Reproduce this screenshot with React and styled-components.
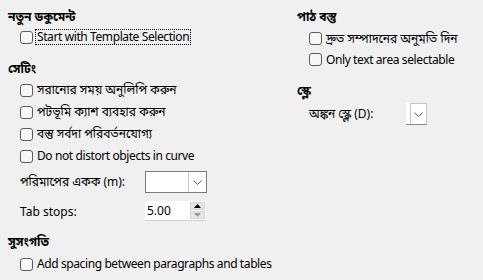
import React from 'react'
import styled, { createGlobalStyle } from 'styled-components'

const GlobalStyle = createGlobalStyle`
  html, body {
    margin: 0;
    padding: 0;
    background: #f0f0f0;
  }
  body {
    font-family: "Noto Sans", "Noto Sans Bengali", "Liberation Sans", sans-serif;
    font-size: 12px;
    color: #000;
  }
`

const Page = styled.div`
  width: 483px;
  height: 280px;
  display: grid;
  grid-template-columns: 289px 1fr;
  background: #f0f0f0;
  overflow: hidden;
`

const Column = styled.div`
  display: flex;
  flex-direction: column;
  padding-top: 7px;
  padding-left: 8px;
`

const Heading = styled.div`
  height: 20px;
  line-height: 20px;
  font-weight: bold;
  margin-top: ${(p) => p.$gap || 0}px;
  white-space: nowrap;
`

const Group = styled.div`
  display: flex;
  flex-direction: column;
  padding-left: 12px;
  margin-top: ${(p) => p.$gap || 0}px;
`

const CheckRow = styled.label`
  display: flex;
  align-items: center;
  gap: 3px;
  height: ${(p) => p.$h || 22}px;
  white-space: nowrap;
`

const Box = styled.span`
  width: 13px;
  height: 13px;
  box-sizing: border-box;
  border: 1px solid #5c5c5c;
  border-radius: 3px;
  background: #f7f7f7;
  flex: none;
`

const Caption = styled.span`
  padding: 0 1px;
  line-height: 14px;
  letter-spacing: ${(p) => (p.$en ? '-0.4px' : 'normal')};
  outline: ${(p) => (p.$focus ? '1px dotted #000' : 'none')};
`

const FieldRow = styled.div`
  display: flex;
  align-items: center;
  height: 24px;
  margin-top: ${(p) => p.$gap || 0}px;
  white-space: nowrap;
`

const FieldLabel = styled.span`
  width: ${(p) => p.$w}px;
  flex: none;
`

const Combo = styled.div`
  display: flex;
  width: ${(p) => p.$w}px;
  height: 22px;
  box-sizing: border-box;
  border: 1px solid #7a7a7a;
  background: #fff;
`

const ComboEntry = styled.div`
  flex: 1;
`

const ComboButton = styled.div`
  width: 17px;
  display: flex;
  align-items: center;
  justify-content: center;
  border-left: 1px solid #c8c8c8;
`

const NarrowCombo = styled.div`
  display: flex;
  width: 21px;
  height: 22px;
  box-sizing: border-box;
  background: #fff;
  border-bottom: 1px solid #8a8a8a;
  padding-left: 4px;
`

const NarrowButton = styled.div`
  flex: 1;
  display: flex;
  align-items: center;
  justify-content: center;
  border: 1px solid #c4c4c4;
  border-bottom: none;
`

const Spin = styled.div`
  display: flex;
  width: 61px;
  height: 20px;
  box-sizing: border-box;
  background: #fff;
  border-bottom: 1px solid #d0d0d0;
`

const SpinValue = styled.div`
  flex: 1;
  padding-left: 2px;
  line-height: 19px;
`

const SpinButtons = styled.div`
  width: 15px;
  display: flex;
  flex-direction: column;
  gap: 1px;
  padding: 1px 1px 1px 0;
`

const SpinButton = styled.div`
  flex: 1;
  display: flex;
  align-items: center;
  justify-content: center;
  background: #e6e6e6;
  border: 1px solid #d4d4d4;
`

const Chevron = () => (
  <svg width="9" height="5" viewBox="0 0 9 5">
    <path d="M0.5 0.5 L4.5 4.5 L8.5 0.5" fill="none" stroke="#606060" strokeWidth="1" />
  </svg>
)

const Arrow = ({ down, color }) => (
  <svg width="7" height="4" viewBox="0 0 7 4">
    <path d={down ? 'M0 0 L7 0 L3.5 4 Z' : 'M0 4 L7 4 L3.5 0 Z'} fill={color} />
  </svg>
)

const Check = ({ children, focus, en, h }) => (
  <CheckRow $h={h}>
    <Box />
    <Caption $focus={focus} $en={en}>
      {children}
    </Caption>
  </CheckRow>
)

export default function App() {
  return (
    <>
      <GlobalStyle />
      <Page>
        <Column>
          <Heading>নতুন ডকুমেন্ট</Heading>
          <Group>
            <Check h={20} focus en>
              Start with Template Selection
            </Check>
          </Group>
          <Heading $gap={12}>সেটিং</Heading>
          <Group>
            <Check>সরানোর সময় অনুলিপি করুন</Check>
            <Check>পটভূমি ক্যাশ ব্যবহার করুন</Check>
            <Check>বস্তু সর্বদা পরিবর্তনযোগ্য</Check>
            <Check en>Do not distort objects in curve</Check>
            <FieldRow $gap={3}>
              <FieldLabel $w={125}>পরিমাপের একক (m):</FieldLabel>
              <Combo $w={62}>
                <ComboEntry />
                <ComboButton>
                  <Chevron />
                </ComboButton>
              </Combo>
            </FieldRow>
            <FieldRow $gap={5}>
              <FieldLabel $w={125}>Tab stops:</FieldLabel>
              <Spin>
                <SpinValue>5.00</SpinValue>
                <SpinButtons>
                  <SpinButton>
                    <Arrow color="#000" />
                  </SpinButton>
                  <SpinButton>
                    <Arrow down color="#9a9a9a" />
                  </SpinButton>
                </SpinButtons>
              </Spin>
            </FieldRow>
          </Group>
          <Heading $gap={9}>সুসংগতি</Heading>
          <Group $gap={1}>
            <Check en>Add spacing between paragraphs and tables</Check>
          </Group>
        </Column>
        <Column>
          <Heading>পাঠ বস্তু</Heading>
          <Group $gap={1}>
            <Check h={21}>দ্রুত সম্পাদনের অনুমতি দিন</Check>
            <Check h={21} en>
              Only text area selectable
            </Check>
          </Group>
          <Heading $gap={11}>স্কেল</Heading>
          <Group $gap={1}>
            <FieldRow>
              <FieldLabel $w={97}>অঙ্কন স্কেল (D):</FieldLabel>
              <NarrowCombo>
                <NarrowButton>
                  <Chevron />
                </NarrowButton>
              </NarrowCombo>
            </FieldRow>
          </Group>
        </Column>
      </Page>
    </>
  )
}
